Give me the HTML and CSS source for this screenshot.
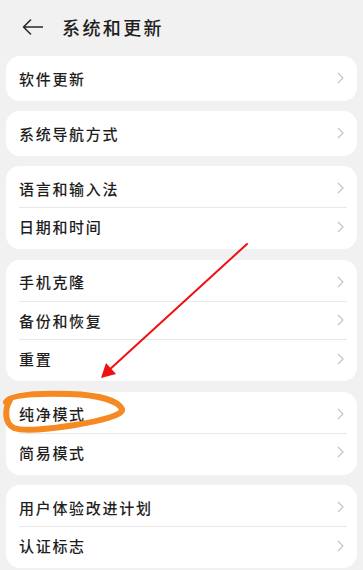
FILE: index.html
```html
<!DOCTYPE html>
<html lang="zh-CN">
<head>
<meta charset="utf-8">
<title>系统和更新</title>
<link rel="stylesheet" href="styles.css">
</head>
<body>
<div class="page">
  <header class="header">
    <svg class="back" width="21" height="16" viewBox="0 0 21 16"><path d="M20.5 8H1.5M8.5 1L1.5 8L8.5 15" fill="none" stroke="#2a2a2a" stroke-width="1.6" stroke-linecap="round" stroke-linejoin="round"/></svg>
    <h1 class="title">系统和更新</h1>
  </header>
  <main class="list">
    <section class="card">
      <div class="row"><span class="label">软件更新</span><svg class="chev" width="7" height="12" viewBox="0 0 7 12"><path d="M1 1L6 6L1 11" fill="none" stroke="#c4c4c4" stroke-width="1.2"/></svg></div>
    </section>
    <section class="card">
      <div class="row"><span class="label">系统导航方式</span><svg class="chev" width="7" height="12" viewBox="0 0 7 12"><path d="M1 1L6 6L1 11" fill="none" stroke="#c4c4c4" stroke-width="1.2"/></svg></div>
    </section>
    <section class="card">
      <div class="row"><span class="label">语言和输入法</span><svg class="chev" width="7" height="12" viewBox="0 0 7 12"><path d="M1 1L6 6L1 11" fill="none" stroke="#c4c4c4" stroke-width="1.2"/></svg></div>
      <div class="divider"></div>
      <div class="row"><span class="label">日期和时间</span><svg class="chev" width="7" height="12" viewBox="0 0 7 12"><path d="M1 1L6 6L1 11" fill="none" stroke="#c4c4c4" stroke-width="1.2"/></svg></div>
    </section>
    <section class="card">
      <div class="row"><span class="label">手机克隆</span><svg class="chev" width="7" height="12" viewBox="0 0 7 12"><path d="M1 1L6 6L1 11" fill="none" stroke="#c4c4c4" stroke-width="1.2"/></svg></div>
      <div class="divider"></div>
      <div class="row"><span class="label">备份和恢复</span><svg class="chev" width="7" height="12" viewBox="0 0 7 12"><path d="M1 1L6 6L1 11" fill="none" stroke="#c4c4c4" stroke-width="1.2"/></svg></div>
      <div class="divider"></div>
      <div class="row"><span class="label">重置</span><svg class="chev" width="7" height="12" viewBox="0 0 7 12"><path d="M1 1L6 6L1 11" fill="none" stroke="#c4c4c4" stroke-width="1.2"/></svg></div>
    </section>
    <section class="card">
      <div class="row"><span class="label">纯净模式</span><svg class="chev" width="7" height="12" viewBox="0 0 7 12"><path d="M1 1L6 6L1 11" fill="none" stroke="#c4c4c4" stroke-width="1.2"/></svg></div>
      <div class="divider"></div>
      <div class="row"><span class="label">简易模式</span><svg class="chev" width="7" height="12" viewBox="0 0 7 12"><path d="M1 1L6 6L1 11" fill="none" stroke="#c4c4c4" stroke-width="1.2"/></svg></div>
    </section>
    <section class="card">
      <div class="row"><span class="label">用户体验改进计划</span><svg class="chev" width="7" height="12" viewBox="0 0 7 12"><path d="M1 1L6 6L1 11" fill="none" stroke="#c4c4c4" stroke-width="1.2"/></svg></div>
      <div class="divider"></div>
      <div class="row"><span class="label">认证标志</span><svg class="chev" width="7" height="12" viewBox="0 0 7 12"><path d="M1 1L6 6L1 11" fill="none" stroke="#c4c4c4" stroke-width="1.2"/></svg></div>
    </section>
  </main>
  <svg class="annot" width="363" height="570" viewBox="0 0 363 570">
    <line x1="247" y1="244" x2="108" y2="371" stroke="#f01010" stroke-width="2" stroke-linecap="round"/>
    <polygon points="101,378 106,363 116,374" fill="#f01010"/>
    <path d="M6 402 C10 394 40 393 70 394 C100 395 118 401 122 409 C124 415 100 421 75 425 C50 429 25 432 14 428 C5 424 4 410 10 400" fill="none" stroke="#f68a22" stroke-width="6" stroke-linecap="round" stroke-linejoin="round"/>
  </svg>
</div>
</body>
</html>
```

FILE: styles.css
```css
* { box-sizing: border-box; }
html, body {
  margin: 0;
  padding: 0;
  background: #f1f1f1;
}
body {
  font-family: "Noto Sans CJK SC", "Noto Sans", sans-serif;
  color: #1e1e1e;
}
.page {
  position: relative;
  width: 363px;
  height: 570px;
  overflow: hidden;
}
.header {
  height: 56px;
  display: flex;
  align-items: center;
  padding: 0 0 2px 22px;
}
.back {
  display: block;
  flex: none;
}
.title {
  margin: 0 0 0 19px;
  font-size: 18px;
  font-weight: 500;
  letter-spacing: 2.4px;
  line-height: 1;
}
.list {
  display: flex;
  flex-direction: column;
  gap: 10.5px;
  padding: 0 6px;
}
.card {
  background: #ffffff;
  border-radius: 14px;
  padding: 3.5px 0;
}
.row {
  height: 37.5px;
  display: flex;
  align-items: center;
  justify-content: space-between;
  padding: 0 13px 0 13px;
}
.label {
  font-size: 15px;
  font-weight: 500;
  letter-spacing: 1.7px;
  line-height: 1;
}
.chev {
  display: block;
  flex: none;
}
.divider {
  height: 1px;
  background: #e9e9e9;
  margin: 0 10px 0 13px;
}
.annot {
  position: absolute;
  left: 0;
  top: 0;
  pointer-events: none;
}
```
